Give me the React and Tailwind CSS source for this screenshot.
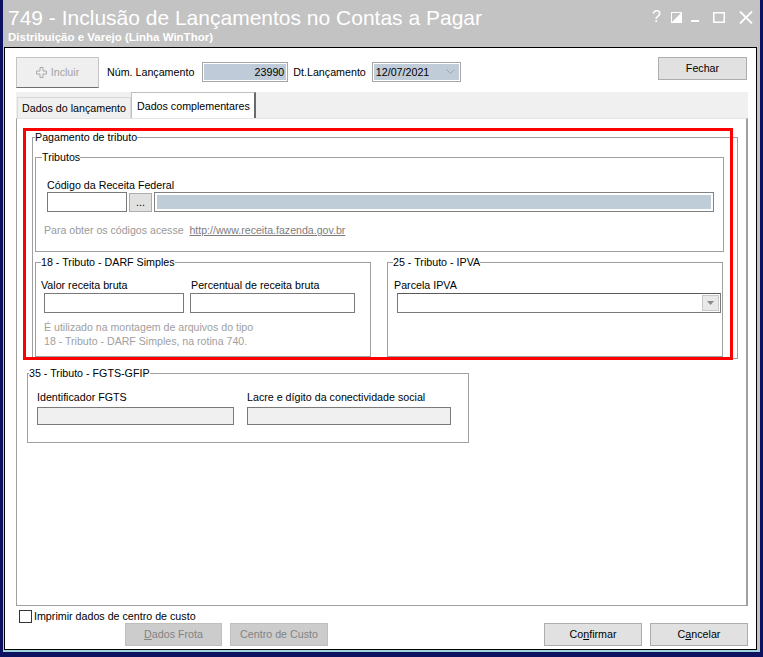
import React from 'react';

const font = "font-['Liberation_Sans',Arial,sans-serif]";

const Label = ({ children, className = '' }) => (
  <div className={`text-[10.7px] leading-[13px] text-black whitespace-nowrap ${className}`}>{children}</div>
);

const Legend = ({ children, className = '' }) => (
  <legend className={`text-[10.7px] leading-[13px] text-black whitespace-nowrap ${className}`}>{children}</legend>
);

const TextBox = ({ className = '', children }) => (
  <div className={`border border-[#7a7a7a] bg-white ${className}`}>{children}</div>
);

const Button = ({ children, className = '', disabled }) => (
  <div
    className={`flex items-center justify-center border text-[10.7px] leading-[13px] ${
      disabled ? 'bg-[#cccccc] border-[#bfbfbf] text-[#838383]' : 'bg-[#e1e1e1] border-[#adadad] text-black'
    } ${className}`}
  >
    {children}
  </div>
);

const TitleControls = () => (
  <div className="flex items-center text-white">
    <span className="text-[16px] leading-none mr-[10px]">?</span>
    <svg width="11" height="11" viewBox="0 0 11 11" className="mr-[9px]">
      <rect x="0.5" y="0.5" width="10" height="10" fill="none" stroke="white" />
      <path d="M1 10 L10 1 L10 10 Z" fill="white" />
    </svg>
    <svg width="9" height="11" viewBox="0 0 9 11" className="mr-[13px]">
      <rect x="0" y="8" width="8" height="2" fill="white" />
    </svg>
    <svg width="12" height="11" viewBox="0 0 12 11" className="mr-[14px]">
      <rect x="0.75" y="0.75" width="10.5" height="9.5" fill="none" stroke="white" strokeWidth="1.5" />
    </svg>
    <svg width="14" height="13" viewBox="0 0 14 13">
      <path d="M1 0.5 L13 12.5 M13 0.5 L1 12.5" stroke="white" strokeWidth="1.8" />
    </svg>
  </div>
);

export default function App() {
  return (
    <div className={`relative w-[763px] h-[657px] bg-[#0c1260] pl-[3px] pr-[3px] pb-[5px] ${font}`}>
      <div className="h-full bg-[#c3c3c3] flex flex-col">
        {/* title bar */}
        <div className="h-[47px] flex pl-[5px] pr-[7px]">
          <div className="flex-1 pt-[5px]">
            <div className="text-[21px] leading-[25px] text-white">749 - Inclusão de Lançamentos no Contas a Pagar</div>
            <div className="text-[11.5px] leading-[13px] font-bold text-white mt-[1px]">Distribuição e Varejo (Linha WinThor)</div>
          </div>
          <div className="pt-[9px]">
            <TitleControls />
          </div>
        </div>

        {/* client area */}
        <div className="ml-[1px] w-[753px] h-[603px] border border-black bg-white flex flex-col">
          {/* toolbar */}
          <div className="flex items-start mt-[9px] pl-[11px] pr-[9px]">
            <div className="w-[83px] h-[31px] flex items-center justify-center gap-[4px] bg-[#efefef] border border-[#c4c4c4] border-b-[#6f6f6f] text-[10.7px] text-[#a3a3a3]">
              <svg width="11" height="11" viewBox="0 0 11 11">
                <path d="M4 0.5 H7 V4 H10.5 V7 H7 V10.5 H4 V7 H0.5 V4 H4 Z" fill="none" stroke="#a8a8a8" />
              </svg>
              <span>Incluir</span>
            </div>
            <Label className="ml-[8px] mt-[9px]">Núm. Lançamento</Label>
            <div className="ml-[8px] mt-[5px] w-[86px] h-[20px] border border-[#a6a6a6] p-[1px] bg-white">
              <div className="h-full bg-[#bfcbd8] flex items-center justify-end pr-[2px] text-[10.7px]">23990</div>
            </div>
            <Label className="ml-[5px] mt-[9px]">Dt.Lançamento</Label>
            <div className="ml-[6px] mt-[5px] w-[89px] h-[20px] border border-[#a6a6a6] p-[1px] bg-white">
              <div className="h-full bg-[#c0ccd8] flex items-center pl-[2px] pr-[4px] text-[10.7px]">
                <span className="flex-1">12/07/2021</span>
                <svg width="9" height="6" viewBox="0 0 9 6">
                  <path d="M0.5 0.5 L4.5 4.5 L8.5 0.5" fill="none" stroke="#9aa4ae" />
                </svg>
              </div>
            </div>
            <Button className="ml-auto w-[89px] h-[23px]">Fechar</Button>
          </div>

          {/* tabs */}
          <div className="mt-[4px] ml-[11px] w-[732px] h-[26px] bg-[#f0f0f0] flex items-end pl-[1px]">
            <div className="w-[114px] h-[21px] border border-b-0 border-[#d9d9d9] bg-[#f0f0f0] text-[10.7px] leading-[13px] pl-[4px] pt-[4px] whitespace-nowrap">
              Dados do lançamento
            </div>
            <div className="w-[125px] h-[26px] border border-b-0 border-[#c0c0c0] border-r-2 border-r-[#6a6a6a] bg-white text-[10.7px] leading-[13px] pl-[5px] pt-[7px] whitespace-nowrap">
              Dados complementares
            </div>
          </div>

          {/* tab page */}
          <div className="ml-[11px] w-[732px] h-[488px] bg-white border-l border-b border-r-2 border-t border-[#a0a0a0] border-t-[#e3e3e3] flex flex-col">
            <fieldset className="mt-[12px] ml-[15px] w-[706px] h-[228px] border border-[#a0a0a0] flex flex-col">
              <Legend className="ml-[2px]">Pagamento de tributo</Legend>

              <fieldset className="mt-[7px] ml-[2px] w-[689px] h-[101px] border border-[#a0a0a0] pl-[11px]">
                <Legend className="-ml-[5px]">Tributos</Legend>
                <Label className="mt-[15px]">Código da Receita Federal</Label>
                <div className="flex items-start gap-[2px]">
                  <TextBox className="w-[80px] h-[20px]" />
                  <Button className="w-[23px] h-[19px] mt-[1px]">...</Button>
                  <div className="w-[560px] h-[20px] border border-[#828282] p-[2px] bg-white">
                    <div className="h-full bg-[#bfcdd9]" />
                  </div>
                </div>
                <div className="mt-[12px] -ml-[3px] text-[10.6px] leading-[13px] text-[#9a9a9a] whitespace-nowrap">
                  Para obter os códigos acesse&nbsp;&nbsp;<span className="underline text-[#7d7d7d]">http://www.receita.fazenda.gov.br</span>
                </div>
              </fieldset>

              <div className="mt-[4px] ml-[2px] flex gap-[16px]">
                <fieldset className="w-[336px] h-[101px] border border-[#a0a0a0] pl-[5px]">
                  <Legend>18 - Tributo - DARF Simples</Legend>
                  <div className="flex mt-[10px]">
                    <div className="w-[150px]">
                      <Label>Valor receita bruta</Label>
                      <TextBox className="ml-[3px] mt-[1px] w-[140px] h-[20px]" />
                    </div>
                    <div>
                      <Label>Percentual de receita bruta</Label>
                      <TextBox className="-ml-[1px] mt-[1px] w-[165px] h-[20px]" />
                    </div>
                  </div>
                  <div className="mt-[8px] ml-[3px] text-[10.6px] leading-[13.5px] text-[#a0a0a0] whitespace-nowrap">
                    <div>É utilizado na montagem de arquivos do tipo</div>
                    <div>18 - Tributo - DARF Simples, na rotina 740.</div>
                  </div>
                </fieldset>

                <fieldset className="w-[336px] h-[101px] border border-[#a0a0a0] pl-[6px]">
                  <Legend className="-ml-[1px]">25 - Tributo - IPVA</Legend>
                  <Label className="mt-[10px]">Parcela IPVA</Label>
                  <div className="mt-[1px] ml-[3px] w-[324px] h-[20px] border border-[#7a7a7a] border-t-[#5a5a5a] bg-white flex justify-end items-center pr-[1px]">
                    <div className="w-[17px] h-[16px] border border-[#c8c8c8] bg-[#e9e9e9] flex items-center justify-center">
                      <svg width="7" height="4" viewBox="0 0 7 4">
                        <path d="M0 0 H7 L3.5 4 Z" fill="#8a8a8a" />
                      </svg>
                    </div>
                  </div>
                </fieldset>
              </div>
            </fieldset>

            <fieldset className="mt-[8px] ml-[10px] w-[442px] h-[76px] border border-[#a0a0a0] pl-[9px]">
              <Legend className="-ml-[8px]">35 - Tributo - FGTS-GFIP</Legend>
              <div className="flex mt-[11px] gap-[13px]">
                <div>
                  <Label>Identificador FGTS</Label>
                  <div className="mt-[3px] w-[197px] h-[18px] border border-[#7a7a7a] bg-[#f0f0f0]" />
                </div>
                <div>
                  <Label>Lacre e dígito da conectividade social</Label>
                  <div className="mt-[3px] w-[204px] h-[18px] border border-[#7a7a7a] bg-[#f0f0f0]" />
                </div>
              </div>
            </fieldset>
          </div>

          {/* footer */}
          <div className="mt-[4px] ml-[14px] h-[13px] flex items-center gap-[2px]">
            <div className="w-[13px] h-[13px] border border-[#333333] bg-white" />
            <Label>Imprimir dados de centro de custo</Label>
          </div>
          <div className="flex pl-[120px] pr-[8px] h-[23px]">
            <Button disabled className="w-[97px] h-[23px]">
              <span><span className="underline">D</span>ados Frota</span>
            </Button>
            <Button disabled className="ml-[8px] w-[98px] h-[23px]">Centro de Custo</Button>
            <Button className="ml-auto w-[98px] h-[23px]">
              <span>Co<span className="underline">n</span>firmar</span>
            </Button>
            <Button className="ml-[8px] w-[98px] h-[23px]">
              <span>C<span className="underline">a</span>ncelar</span>
            </Button>
          </div>
        </div>
        <div className="h-[2px] bg-[#9fd4dc]" />
      </div>

      {/* annotation */}
      <div className="absolute left-[23px] top-[128px] w-[710px] h-[232px] border-[3px] border-[#ff0000] pointer-events-none" />
    </div>
  );
}
